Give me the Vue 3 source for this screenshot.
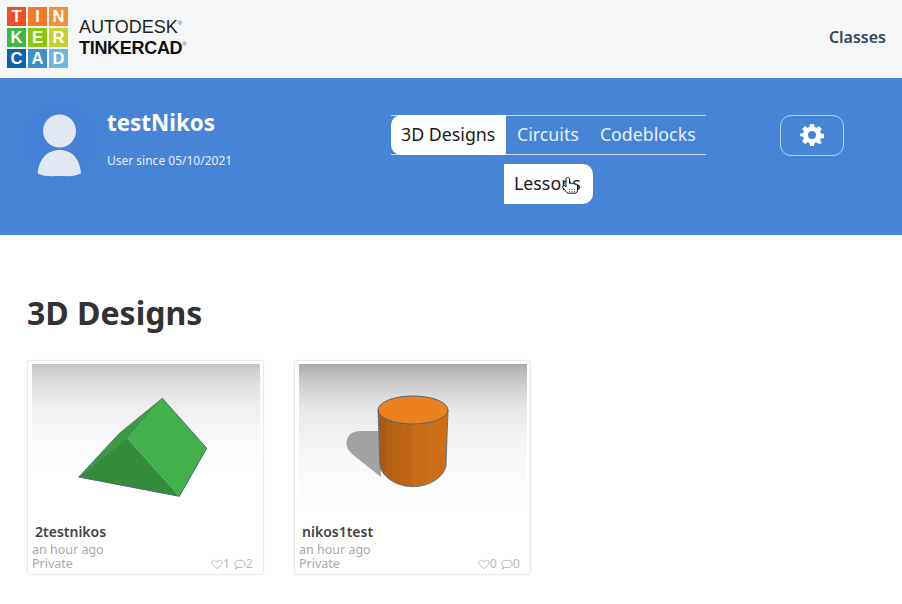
<script setup>
const tiles = [
  { l: 'T', c: '#f04e23' }, { l: 'I', c: '#f47b2a' }, { l: 'N', c: '#f68e38' },
  { l: 'K', c: '#3fb54a' }, { l: 'E', c: '#8bc90b' }, { l: 'R', c: '#c5d22c' },
  { l: 'C', c: '#0b63ac' }, { l: 'A', c: '#3a8fc6' }, { l: 'D', c: '#6db8dd' }
]
const designs = [
  { id: 'prism', name: '2testnikos', likes: 1, comments: 2 },
  { id: 'cyl', name: 'nikos1test', likes: 0, comments: 0 }
]
</script>

<template>
  <div class="page">
    <header class="top">
      <div class="brand">
        <div class="tiles">
          <span v-for="t in tiles" :key="t.l" class="tile" :style="{ background: t.c }">{{ t.l }}</span>
        </div>
        <div class="wordmark">
          <span class="wm1">AUTODESK<sup>®</sup></span>
          <span class="wm2">TINKERCAD<sup>®</sup></span>
        </div>
      </div>
      <a class="classes">Classes</a>
    </header>

    <section class="hero">
      <div class="profile">
        <div class="avatar">
          <svg width="76" height="76" viewBox="0 0 76 76">
            <circle cx="38" cy="38" r="37.5" fill="#4582d6" />
            <circle cx="37.5" cy="28" r="16.5" fill="#e1e8f4" />
            <path d="M15.700 70.500C17 56 25 47 37.500 47S58 56 59 70.500C52 74 44 73 37.500 73S22 74 15.700 70.500Z" fill="#e1e8f4" />
          </svg>
        </div>
        <div class="who">
          <div class="name">testNikos</div>
          <div class="since">User since 05/10/2021</div>
        </div>
      </div>

      <nav class="tabs">
        <div class="tabrow">
          <a class="tab active">3D Designs</a>
          <a class="tab">Circuits</a>
          <a class="tab">Codeblocks</a>
        </div>
        <a class="lessons">
          Lessons
          <svg class="cursor" width="18" height="18" viewBox="0 0 18 18">
            <path d="M4 3c0-2 3.500-2 3.500 0v4.500c1-.6 2.200-.4 2.700.3 1-.5 2.200-.3 2.700.5 1.100-.4 2.600.2 2.600 1.700V14c0 1.700-1 3.200-2.500 3.200H6.500c-1 0-1.700-.5-2.300-1.400L.8 11.500C0 10 1.800 9 3 10l1 1Z" fill="#fff" stroke="#111" stroke-width="1" />
            <path d="M7.500 13v3M10 13v3M12.500 13v3" stroke="#333" stroke-width=".8" stroke-dasharray="1 1" />
          </svg>
        </a>
      </nav>

      <button class="gear" aria-label="Settings">
        <svg width="24" height="24" viewBox="0 0 24 24">
          <path fill="#fff" fill-rule="evenodd" d="M10 1h4l.6 3.100 1.700.7L19 3l2.900 2.900-1.800 2.700.7 1.700 3.200.7v4l-3.200.6-.7 1.700 1.800 2.700L19 21l-2.700-1.800-1.700.7L14 23h-4l-.6-3.100-1.700-.7L5 21l-2.900-2.900 1.800-2.700-.7-1.700L0 13v-2l0-.300 3.200-.7.700-1.700L2.100 5.900 5 3l2.700 1.800 1.700-.7L10 1Zm2 7a4 4 0 1 0 0 8 4 4 0 0 0 0-8Z" />
        </svg>
      </button>
    </section>

    <main class="content">
      <h1 class="title">3D Designs</h1>
      <div class="grid">
        <article v-for="d in designs" :key="d.id" class="card">
          <svg v-if="d.id === 'prism'" class="thumb" viewBox="0 0 228 152">
            <defs>
              <linearGradient id="bg1" x1="0" y1="0" x2="0" y2="1">
                <stop offset="0" stop-color="#c8c8c8" />
                <stop offset=".12" stop-color="#dedede" />
                <stop offset=".3" stop-color="#f0f0f0" />
                <stop offset=".5" stop-color="#fafafa" />
                <stop offset=".72" stop-color="#fff" />
              </linearGradient>
            </defs>
            <rect width="228" height="152" fill="url(#bg1)" />
            <path d="M46.700 113 87.300 69.300 130.300 34.300 95.300 74.300Z" fill="#3b9a42" stroke="#3b6a70" stroke-width=".6" />
            <path d="M130.300 34.300 174.700 84.300 147.300 132.300 95.300 74.300Z" fill="#43b14b" />
            <path d="M95.300 74.300 147.300 132.300 46.700 113Z" fill="#358c3b" />
            <path d="M46.700 113 147.300 132.300 174.700 84.300 130.300 34.300" fill="none" stroke="#3f6a78" stroke-width="1" />
          </svg>
          <svg v-else class="thumb" viewBox="0 0 228 152">
            <defs>
              <linearGradient id="bg2" x1="0" y1="0" x2="0" y2="1">
                <stop offset="0" stop-color="#aaaaaa" />
                <stop offset=".1" stop-color="#c8c8c8" />
                <stop offset=".3" stop-color="#e8e8e8" />
                <stop offset=".55" stop-color="#f6f6f6" />
                <stop offset=".85" stop-color="#fdfdfd" />
                <stop offset="1" stop-color="#fff" />
              </linearGradient>
              <linearGradient id="side" x1="0" y1="0" x2="1" y2="0">
                <stop offset=".1" stop-color="#a85a12" />
                <stop offset=".1" stop-color="#b25f13" />
                <stop offset=".2" stop-color="#b25f13" />
                <stop offset=".2" stop-color="#b86314" />
                <stop offset=".33" stop-color="#b86314" />
                <stop offset=".33" stop-color="#bf6616" />
                <stop offset=".48" stop-color="#bf6616" />
                <stop offset=".48" stop-color="#c96c17" />
                <stop offset=".7" stop-color="#c96c17" />
                <stop offset=".7" stop-color="#cc6e18" />
              </linearGradient>
            </defs>
            <rect width="228" height="152" fill="url(#bg2)" />
            <path d="M82 67H62C52 67 47.500 72 47.500 80 48 86 52 89 58 94L82 113Z" fill="#a2a2a2" />
            <path d="M79 46 81 102C84 115 100 122.700 114 122.700S144 115 147 102L149 46Z" fill="url(#side)" stroke="#466a80" stroke-width=".8" />
            <ellipse cx="114" cy="46" rx="35" ry="14" fill="#ec7f1e" stroke="#466a80" stroke-width="1" />
          </svg>
          <div class="meta">
            <div class="dname">{{ d.name }}</div>
            <div class="foot">
              <div class="when">
                <div>an hour ago</div>
                <div>Private</div>
              </div>
              <div class="stats">
                <svg width="12" height="11" viewBox="0 0 15 12"><path d="M7.500 11.200 1.600 5.700C-.4 3 2.300-.2 5.200 1c1.100.4 1.800 1.200 2.300 2 .5-.8 1.200-1.600 2.300-2 2.900-1.200 5.600 2 3.600 4.700Z" fill="none" stroke="#b5bcc6" stroke-width="1.200" /></svg>
                <span>{{ d.likes }}</span>
                <svg class="bubble" width="12" height="11" viewBox="0 0 14 12"><path d="M7 1c3.300 0 6 1.800 6 4.300S10.300 9.600 7 9.600c-.8 0-1.500-.1-2.200-.3L2 11l.8-2.700C1.700 7.500 1 6.500 1 5.300 1 2.800 3.700 1 7 1Z" fill="none" stroke="#b5bcc6" stroke-width="1.200" /></svg>
                <span>{{ d.comments }}</span>
              </div>
            </div>
          </div>
        </article>
      </div>
    </main>
  </div>
</template>

<style>
html, body { margin: 0; background: #fff; }
</style>

<style scoped>
.page { width: 902px; height: 604px; overflow: hidden; font-family: "Noto Sans", "Open Sans", sans-serif; }

.top { height: 78px; box-sizing: border-box; background: #f6f7f9; display: flex; align-items: center; justify-content: space-between; padding: 0 16px 3px 7px; }
.brand { display: flex; align-items: center; gap: 11px; }
.tiles { display: grid; grid-template-columns: repeat(3, 19px); grid-auto-rows: 19px; gap: 2px; }
.tile { display: flex; align-items: center; justify-content: center; color: #fff; font: 700 16.500px "Liberation Sans", sans-serif; }
.wordmark { display: flex; flex-direction: column; font-family: "Liberation Sans", sans-serif; color: #222; line-height: 20.500px; }
.wm1 { font-size: 18px; }
.wm2 { font-size: 18px; font-weight: 700; color: #111; letter-spacing: -.3px; }
sup { font-size: 6px; line-height: 0; vertical-align: 8px; font-weight: 400; color: #555; }
.classes { font-size: 16px; font-weight: 600; color: #34475c; margin-bottom: 2px; }

.hero { height: 157px; box-sizing: border-box; background: #4784d6; display: flex; align-items: flex-start; padding: 25px 58px 0 22px; }
.profile { display: flex; width: 369px; flex: none; }
.avatar { width: 76px; height: 76px; flex: none; margin-right: 9px; }
.avatar svg { display: block; }
.who { color: #fff; }
.name { font-size: 22.400px; font-weight: 700; line-height: 30px; margin-top: 5px; }
.since { font-size: 12px; line-height: 16px; margin-top: 15px; color: #e8eef8; }

.tabs { width: 389px; flex: none; margin-top: 12px; }
.tabrow { display: flex; width: 315px; height: 40px; box-sizing: border-box; border-top: 1px solid #c9dcf5; border-bottom: 1px solid #c9dcf5; }
.tab { font-size: 17.800px; line-height: 36px; padding: 0 10px 0 11px; color: #e6effb; white-space: nowrap; }
.tab.active { background: #fff; color: #1a1a1a; margin: -1px 0; line-height: 38px; height: 40px; border-radius: 10px 0 0 10px; width: 115px; box-sizing: border-box; padding: 0 0 0 10px; }
.lessons { position: relative; display: block; width: 89px; height: 40px; margin: 9px 0 0 113px; box-sizing: border-box; padding-left: 10px; background: #fff; color: #1a1a1a; font-size: 17.800px; line-height: 38px; border-radius: 0 10px 10px 0; }
.cursor { position: absolute; left: 58px; top: 12px; }

.gear { width: 64px; height: 41px; flex: none; box-sizing: border-box; margin-top: 12px; margin-left: auto; padding: 0; background: transparent; border: 1px solid #bcd2f0; border-radius: 11px; display: flex; align-items: center; justify-content: center; }
.gear svg { display: block; margin-top: -2px; }

.content { padding: 57px 0 0 27px; }
.title { margin: 0 0 26px; font-size: 32px; line-height: 42px; font-weight: 700; color: #323232; }
.grid { display: flex; gap: 30px; }
.card { width: 237px; height: 215px; box-sizing: border-box; background: #fff; border: 1px solid #eaeaea; border-radius: 3px; box-shadow: 0 0 2px rgba(0,0,0,.06); padding: 3px 4px; display: flex; flex-direction: column; }
.thumb { width: 228px; height: 152px; display: block; flex: none; }
.meta { flex: 1; position: relative; }
.dname { font-size: 14px; line-height: 18px; font-weight: 600; color: #444; margin: 7px 0 0 3px; }
.foot { display: flex; justify-content: space-between; align-items: flex-end; margin-top: 2px; }
.when { font-size: 12.500px; line-height: 14px; color: #a9a9a9; }
.stats { display: flex; align-items: center; font-size: 12.500px; line-height: 14px; color: #b5bcc6; padding-right: 6px; }
.bubble { margin-left: 4px; }
</style>
